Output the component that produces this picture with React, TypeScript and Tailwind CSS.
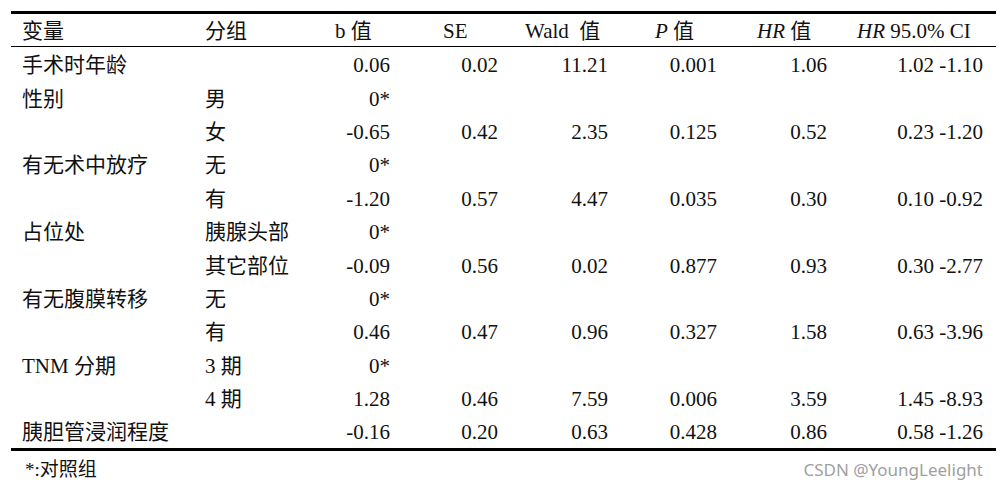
import React from "react";

const font = "font-['Liberation_Serif','Noto_Sans_CJK_SC',serif]";

// column widths from x=11 to x=996
const grid =
  "grid grid-cols-[189px_120px_80px_110px_110px_110px_110px_156px]";

const cellPad = [
  "pl-[11px] text-left",
  "pl-[5px] text-left",
  "pr-[10px] text-right",
  "pr-[12px] text-right",
  "pr-[12px] text-right",
  "pr-[13px] text-right",
  "pr-[13px] text-right",
  "pr-[13px] text-right",
];

const rows: string[][] = [
  ["手术时年龄", "", "0.06", "0.02", "11.21", "0.001", "1.06", "1.02 -1.10"],
  ["性别", "男", "0*", "", "", "", "", ""],
  ["", "女", "-0.65", "0.42", "2.35", "0.125", "0.52", "0.23 -1.20"],
  ["有无术中放疗", "无", "0*", "", "", "", "", ""],
  ["", "有", "-1.20", "0.57", "4.47", "0.035", "0.30", "0.10 -0.92"],
  ["占位处", "胰腺头部", "0*", "", "", "", "", ""],
  ["", "其它部位", "-0.09", "0.56", "0.02", "0.877", "0.93", "0.30 -2.77"],
  ["有无腹膜转移", "无", "0*", "", "", "", "", ""],
  ["", "有", "0.46", "0.47", "0.96", "0.327", "1.58", "0.63 -3.96"],
  ["TNM 分期", "3 期", "0*", "", "", "", "", ""],
  ["", "4 期", "1.28", "0.46", "7.59", "0.006", "3.59", "1.45 -8.93"],
  ["胰胆管浸润程度", "", "-0.16", "0.20", "0.63", "0.428", "0.86", "0.58 -1.26"],
];

export default function App() {
  return (
    <div className={`w-[1008px] h-[491px] bg-white text-[#111] ${font} text-[21px] leading-none`}>
      <div className="pt-[11px] pl-[11px]">
        <div className="w-[985px] border-t-[3px] border-black">
          {/* header */}
          <div className={`${grid} h-[33px] pt-[2px] items-center border-b border-black`}>
            <div className="pl-[11px]">变量</div>
            <div className="pl-[5px]">分组</div>
            <div className="pl-[15px]">b 值</div>
            <div className="pl-[43px]">SE</div>
            <div className="pl-[15px] whitespace-pre">Wald  值</div>
            <div className="pl-[35px]">
              <i>P</i> 值
            </div>
            <div className="pl-[27px]">
              <i>HR</i> 值
            </div>
            <div className="pl-[17px]">
              <i>HR</i> 95.0% CI
            </div>
          </div>

          {/* body */}
          <div className="border-b-[3px] border-black">
            {rows.map((r, i) => (
              <div key={i} className={`${grid} h-[33.4px] pt-[4px] items-center`}>
                {r.map((c, j) => (
                  <div key={j} className={cellPad[j]}>
                    {c}
                  </div>
                ))}
              </div>
            ))}
          </div>

          {/* footnote */}
          <div className="flex items-center justify-between h-[36px] pt-[2px]">
            <div className="pl-[14px] text-[19px]">*:对照组</div>
            <div className="pr-[13px] text-[17px] text-[#a0a0a0] font-['Noto_Sans','Noto_Sans_CJK_SC',sans-serif]">
              CSDN @YoungLeelight
            </div>
          </div>
        </div>
      </div>
    </div>
  );
}
